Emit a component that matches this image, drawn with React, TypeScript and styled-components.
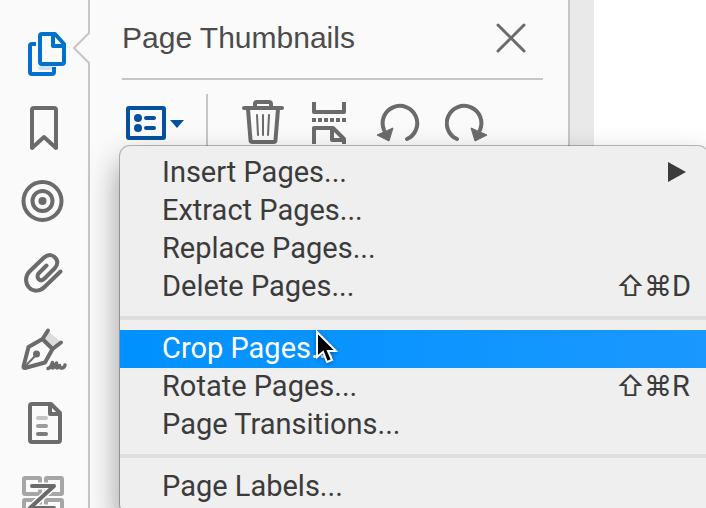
import React from "react";
import styled, { createGlobalStyle, css } from "styled-components";

const GlobalStyle = createGlobalStyle`
  html, body, #root { height: 100%; }
  body { margin: 0; overflow: hidden; background: #fff; }
  *, *::before, *::after { box-sizing: border-box; }
`;

const Window = styled.div`
  position: relative;
  display: flex;
  height: 100%;
  overflow: hidden;
`;

const resetButton = css`
  display: block;
  margin: 0;
  padding: 0;
  border: 0;
  background: none;
  color: inherit;
  font: inherit;
`;

const Rail = styled.nav`
  position: relative;
  flex: none;
  display: flex;
  flex-direction: column;
  align-items: flex-start;
  gap: 26px;
  width: 90px;
  padding: 30px 0 0 20px;
  border-right: 2px solid #c6c6c6;
  background: #fafafa;
`;

const RailButton = styled.button<{ $active?: boolean }>`
  ${resetButton}
  flex: none;
  color: ${(p) => (p.$active ? "#0071ce" : "#6b6b6b")};

  svg {
    display: block;
  }
`;

const Notch = styled.svg`
  position: absolute;
  top: 32px;
  right: -2px;
`;

const Panel = styled.section`
  flex: 0 0 480px;
  padding: 0 25px 0 32px;
  border-right: 2px solid #c6c6c6;
  background: #fafafa;
`;

const PanelHeader = styled.header`
  display: flex;
  align-items: center;
  justify-content: space-between;
  height: 80px;
  padding-right: 16px;
  padding-bottom: 2px;
  border-bottom: 2px solid #c6c6c6;
`;

const PanelTitle = styled.h1`
  margin: 0;
  color: #4b4b4b;
  font: 400 30px/36px "Liberation Sans", Arial, sans-serif;
`;

const IconButton = styled.button`
  ${resetButton}
  color: #6b6b6b;

  svg {
    display: block;
  }
`;

const OptionsButton = styled(IconButton)`
  color: #05519f;
`;

const Toolbar = styled.div`
  display: flex;
  align-items: flex-start;
  gap: 24px;
  padding: 20px 0 0 4px;
`;

const ToolbarLead = styled.div`
  display: flex;
  align-items: flex-start;
  gap: 20px;
  margin-right: 9px;
`;

const ToolbarRule = styled.div`
  width: 2px;
  height: 60px;
  margin-top: -6px;
  background: #c6c6c6;
`;

const Gutter = styled.div`
  flex: 0 0 24px;
  background: #e9e9e9;
`;

const Page = styled.main`
  flex: 1;
  background: #fff;
`;

const Menu = styled.div`
  position: absolute;
  top: 146px;
  left: 120px;
  right: -2px;
  padding: 8px 0;
  border-radius: 10px;
  background: #efefef;
  box-shadow: 0 0 0 1px rgba(0, 0, 0, 0.26), 0 16px 32px rgba(0, 0, 0, 0.42);
  color: #3b3b3b;
  font: 400 29px/36px Roboto, "Noto Sans", sans-serif;
`;

const MenuItem = styled.button<{ $selected?: boolean }>`
  ${resetButton}
  display: flex;
  align-items: center;
  justify-content: space-between;
  width: 100%;
  height: 38px;
  padding: 0 16px 2px 42px;
  text-align: left;
  white-space: nowrap;
  background: ${(p) => (p.$selected ? "linear-gradient(90deg, #0091ff, #1a98ff)" : "transparent")};
  color: ${(p) => (p.$selected ? "#fff" : "inherit")};
`;

const MenuRule = styled.hr`
  height: 4px;
  margin: 10px 0;
  border: 0;
  background: #dedede;
`;

const Shortcut = styled.span`
  display: flex;
  width: 76px;
`;

const Key = styled.span`
  width: 28px;
  font-family: Inter, "DejaVu Sans", sans-serif;
  font-size: 28px;
`;

const SubmenuArrow = styled.svg`
  margin-right: 6px;
`;

const Pointer = styled.svg`
  position: absolute;
  top: 328px;
  left: 314px;
  filter: drop-shadow(0 1px 2px rgba(0, 0, 0, 0.4));
  pointer-events: none;
`;

type RailItem = { label: string; drawing: React.ReactNode };

const railItems: RailItem[] = [
  {
    label: "Page Thumbnails",
    drawing: (
      <>
        <path d="M20 38h10" stroke="#cfe1f2" />
        <path d="M16 14h-4a2 2 0 0 0-2 2v26a2 2 0 0 0 2 2h20a2 2 0 0 0 2-2v-5" strokeLinecap="butt" />
        <path d="M22 4h13l9 10v18a2 2 0 0 1-2 2H22a2 2 0 0 1-2-2V6a2 2 0 0 1 2-2z" />
        <path d="M33 4v12h11" strokeLinecap="butt" />
      </>
    ),
  },
  {
    label: "Bookmarks",
    drawing: <path d="M12 44V6a2 2 0 0 1 2-2h20a2 2 0 0 1 2 2v38L24 33z" />,
  },
  {
    label: "Destinations",
    drawing: (
      <>
        <circle cx="22.5" cy="23" r="19" />
        <circle cx="22.5" cy="23" r="10" />
        <circle cx="22.5" cy="23" r="4" fill="currentColor" stroke="none" />
      </>
    ),
  },
  {
    label: "Attachments",
    drawing: (
      <path d="M40.500 19.500L24.500 35C20 39.500 13 40 9 35.500C5 31 5 24 9.500 19.500L23 6.500C27 2.500 31 2 34.500 5C38.500 8.500 38 13 34.500 16.500L24.500 26.500C22 29 20 28.500 18.500 27C17 25 17.500 22.500 19 21L26.500 13.500" />
    ),
  },
  {
    label: "Signatures",
    drawing: (
      <>
        <path d="M23 13l5-8 13 11-8 7z" fill="#dcdcdc" stroke="none" />
        <path d="M28 4.500L22.500 13 32.500 23 41 16.500" />
        <path d="M22.500 13L8.500 21 3.500 40.500q0 1.500 1.500 1.500L25 36.500l7.500-13.500" />
        <path d="M5 40.500L16 29" strokeWidth="2" />
        <circle cx="16.5" cy="28" r="3.5" fill="currentColor" stroke="none" />
        <path d="M28 42.500q3-1 4.500-6l-.500 4.500q0 1.500 1.500.500l3-4.500v4q0 1.500 1.500.500l1.500-2q.500 3 3 2.500 2-.500 2.500-3" strokeWidth="3.5" />
      </>
    ),
  },
  {
    label: "Content",
    drawing: (
      <>
        <path d="M12 4h19l9 9v27a2 2 0 0 1-2 2H12a2 2 0 0 1-2-2V6a2 2 0 0 1 2-2z" />
        <path d="M30 4v10h10" strokeLinecap="butt" />
        <path d="M18 18h8" stroke="#c4c4c4" />
        <path d="M18 26h8" stroke="#9c9c9c" />
        <path d="M18 34h8" stroke="#7c7c7c" />
      </>
    ),
  },
  {
    label: "Order",
    drawing: (
      <>
        <g stroke="#a6a6a6">
          <rect x="4" y="4" width="16" height="16" rx="1" />
          <rect x="26" y="4" width="16" height="16" rx="1" />
          <rect x="4" y="26" width="16" height="16" rx="1" />
          <rect x="26" y="26" width="16" height="16" rx="1" />
        </g>
        <path d="M12 12h22L10 34h24" stroke="#fafafa" strokeWidth="7" />
        <path d="M12 12h22L10 34h24" />
      </>
    ),
  },
];

type Entry = "rule" | { label: string; keyName?: string; submenu?: boolean; selected?: boolean };

const entries: Entry[] = [
  { label: "Insert Pages...", submenu: true },
  { label: "Extract Pages..." },
  { label: "Replace Pages..." },
  { label: "Delete Pages...", keyName: "D" },
  "rule",
  { label: "Crop Pages...", selected: true },
  { label: "Rotate Pages...", keyName: "R" },
  { label: "Page Transitions..." },
  "rule",
  { label: "Page Labels..." },
];

function RotateDrawing() {
  return (
    <>
      <path d="M30 39A17.300 17.300 0 1 0 7 30" fill="none" stroke="currentColor" strokeWidth="4" strokeLinecap="round" />
      <path d="M0 35L16 28l-4 13z" fill="currentColor" stroke="currentColor" strokeLinejoin="round" />
    </>
  );
}

export default function App() {
  return (
    <>
      <GlobalStyle />
      <Window>
        <Rail aria-label="Navigation panes">
          {railItems.map((item, i) => (
            <RailButton key={item.label} type="button" aria-label={item.label} $active={i === 0}>
              <svg width="48" height="48" viewBox="0 0 48 48" fill="none" stroke="currentColor" strokeWidth="4" strokeLinejoin="round" strokeLinecap="round">
                {item.drawing}
              </svg>
            </RailButton>
          ))}
          <Notch width="17" height="32" viewBox="0 0 17 32" fill="none">
            <path d="M17 1L2 16l15 15z" fill="#fafafa" />
            <path d="M16 0v1L1 16l15 15v1" stroke="#c6c6c6" strokeWidth="2" />
          </Notch>
        </Rail>

        <Panel>
          <PanelHeader>
            <PanelTitle>Page Thumbnails</PanelTitle>
            <IconButton type="button" aria-label="Close">
              <svg width="32" height="32" viewBox="0 0 32 32" stroke="currentColor" strokeWidth="3" strokeLinecap="round">
                <path d="M3 3l26 26M29 3L3 29" />
              </svg>
            </IconButton>
          </PanelHeader>
          <Toolbar>
            <ToolbarLead>
              <OptionsButton type="button" aria-label="Options" aria-haspopup="menu" aria-expanded>
                <svg width="60" height="44" viewBox="0 0 60 44" fill="currentColor">
                  <rect x="2" y="8" width="36" height="30" rx="1" fill="none" stroke="currentColor" strokeWidth="4" />
                  <circle cx="12" cy="18" r="4" />
                  <circle cx="12" cy="28" r="4" />
                  <rect x="18" y="16" width="12" height="4" rx="2" />
                  <rect x="18" y="26" width="12" height="4" rx="2" />
                  <path d="M44 20h14l-7 8z" />
                </svg>
              </OptionsButton>
              <ToolbarRule />
            </ToolbarLead>
            <IconButton type="button" aria-label="Delete pages">
              <svg width="44" height="44" viewBox="0 0 44 44" fill="none" stroke="currentColor" strokeWidth="4" strokeLinejoin="round" strokeLinecap="round">
                <path d="M3 8h38M14 7V4a2 2 0 0 1 2-2h12a2 2 0 0 1 2 2v3" />
                <path d="M7 9l2.500 31a2 2 0 0 0 2 2h21a2 2 0 0 0 2-2L37 9" />
                <path d="M16 15l1 20M22 15v20M28 15l-1 20" strokeWidth="2" />
              </svg>
            </IconButton>
            <IconButton type="button" aria-label="Insert pages">
              <svg width="44" height="44" viewBox="0 0 44 44" fill="none" stroke="currentColor" strokeWidth="4" strokeLinejoin="round">
                <path d="M5 2v10h30V2" />
                <path d="M3 20h34" strokeDasharray="4 2" />
                <path d="M5 44V28h19l11 11v5M23 28v12h12" />
              </svg>
            </IconButton>
            <IconButton type="button" aria-label="Rotate counterclockwise">
              <svg width="44" height="44" viewBox="0 0 44 44">
                <RotateDrawing />
              </svg>
            </IconButton>
            <IconButton type="button" aria-label="Rotate clockwise">
              <svg width="44" height="44" viewBox="0 0 44 44">
                <g transform="matrix(-1 0 0 1 42 0)">
                  <RotateDrawing />
                </g>
              </svg>
            </IconButton>
          </Toolbar>
        </Panel>
        <Gutter />
        <Page />

        <Menu role="menu">
          {entries.map((entry, i) =>
            entry === "rule" ? (
              <MenuRule key={i} />
            ) : (
              <MenuItem key={i} type="button" role="menuitem" $selected={entry.selected}>
                <span>{entry.label}</span>
                {entry.submenu && (
                  <SubmenuArrow width="18" height="20" viewBox="0 0 18 20" fill="currentColor">
                    <path d="M0 0l18 10L0 20z" />
                  </SubmenuArrow>
                )}
                {entry.keyName && (
                  <Shortcut>
                    <Key>⇧</Key>
                    <Key>⌘</Key>
                    <span>{entry.keyName}</span>
                  </Shortcut>
                )}
              </MenuItem>
            )
          )}
        </Menu>

        <Pointer width="28" height="40" viewBox="0 0 28 40" aria-hidden="true">
          <path d="M3 4v25l6-5 4 10 5-2-4-9h8z" fill="#000" stroke="#fff" strokeWidth="2" />
        </Pointer>
      </Window>
    </>
  );
}
